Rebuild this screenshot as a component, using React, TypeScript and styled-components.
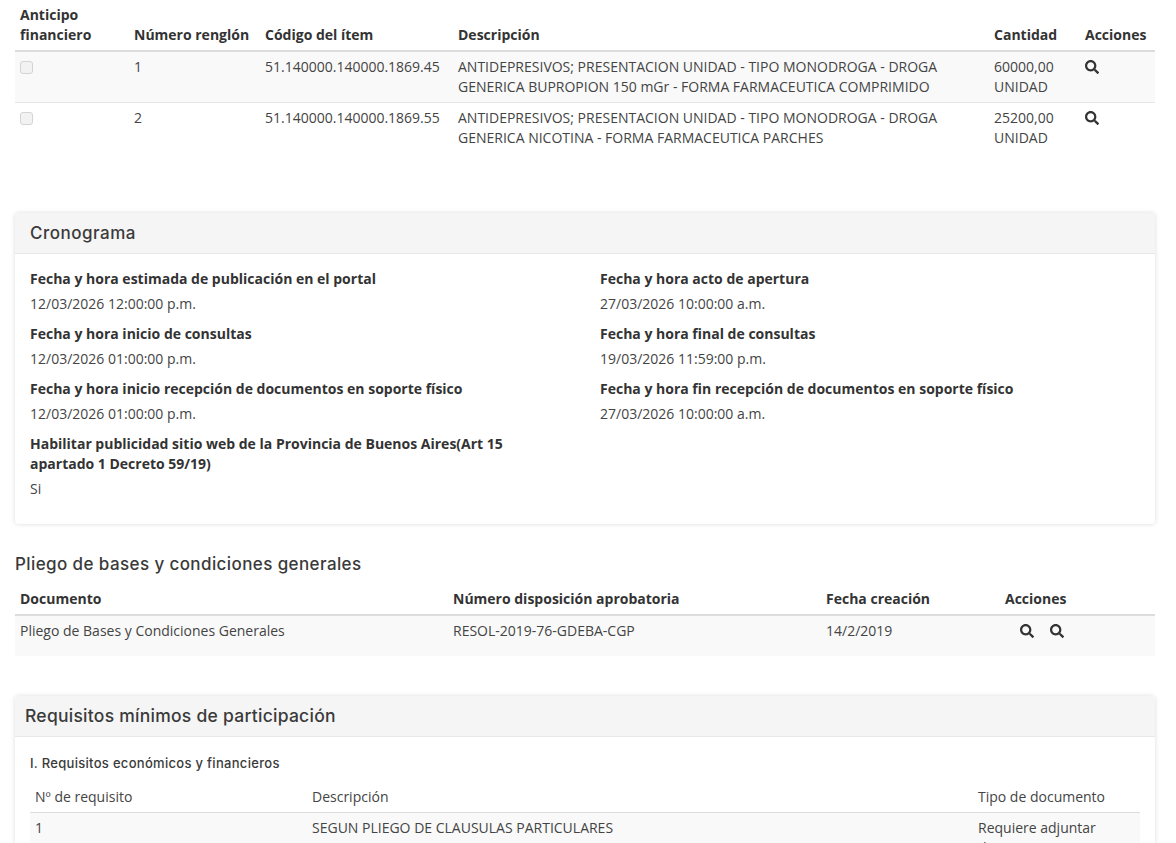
import React from 'react'
import styled, { createGlobalStyle } from 'styled-components'
import { FaSearch } from 'react-icons/fa'

const GlobalStyle = createGlobalStyle`
  html, body {
    margin: 0;
    height: 100%;
    overflow: hidden;
    background: #fff;
  }
  body {
    font-family: 'Open Sans', 'Liberation Sans', sans-serif;
    font-size: 14px;
    line-height: 20px;
    color: #333;
  }
`

const items = [
  {
    id: 1,
    code: '51.140000.140000.1869.45',
    desc: 'ANTIDEPRESIVOS; PRESENTACION UNIDAD - TIPO MONODROGA - DROGA GENERICA BUPROPION 150 mGr - FORMA FARMACEUTICA COMPRIMIDO',
    qty: '60000,00',
  },
  {
    id: 2,
    code: '51.140000.140000.1869.55',
    desc: 'ANTIDEPRESIVOS; PRESENTACION UNIDAD - TIPO MONODROGA - DROGA GENERICA NICOTINA - FORMA FARMACEUTICA PARCHES',
    qty: '25200,00',
  },
]

const schedule = [
  ['Fecha y hora estimada de publicación en el portal', '12/03/2026 12:00:00 p.m.'],
  ['Fecha y hora acto de apertura', '27/03/2026 10:00:00 a.m.'],
  ['Fecha y hora inicio de consultas', '12/03/2026 01:00:00 p.m.'],
  ['Fecha y hora final de consultas', '19/03/2026 11:59:00 p.m.'],
  ['Fecha y hora inicio recepción de documentos en soporte físico', '12/03/2026 01:00:00 p.m.'],
  ['Fecha y hora fin recepción de documentos en soporte físico', '27/03/2026 10:00:00 a.m.'],
  ['Habilitar publicidad sitio web de la Provincia de Buenos Aires(Art 15 apartado 1 Decreto 59/19)', 'Si'],
]

const App = () => (
  <Page>
    <GlobalStyle />
    <Table>
      <colgroup>
        <col width={114} />
        <col width={131} />
        <col width={193} />
        <col width={536} />
        <col width={91} />
        <col width={75} />
      </colgroup>
      <thead>
        <tr>
          <Th>Anticipo financiero</Th>
          <Th>Número renglón</Th>
          <Th>Código del ítem</Th>
          <Th>Descripción</Th>
          <Th>Cantidad</Th>
          <Th>Acciones</Th>
        </tr>
      </thead>
      <tbody>
        {items.map((item) => (
          <Row key={item.id} $striped={item.id === 1} $divider={item.id === 1}>
            <Td>
              <Check type="checkbox" disabled />
            </Td>
            <Td>{item.id}</Td>
            <Td>{item.code}</Td>
            <Td>{item.desc}</Td>
            <Td>
              {item.qty}
              <br />
              UNIDAD
            </Td>
            <Td>
              <IconButton>
                <FaSearch size={14} />
              </IconButton>
            </Td>
          </Row>
        ))}
      </tbody>
    </Table>

    <Card $top={60}>
      <CardHeader $inset={15}>
        <CardTitle $size={17} $spacing={0.5}>Cronograma</CardTitle>
      </CardHeader>
      <ScheduleGrid>
        {schedule.map(([label, value]) => (
          <Field key={label}>
            <FieldLabel>{label}</FieldLabel>
            <div>{value}</div>
          </Field>
        ))}
      </ScheduleGrid>
    </Card>

    <SectionTitle>Pliego de bases y condiciones generales</SectionTitle>
    <Table>
      <colgroup>
        <col width={433} />
        <col width={373} />
        <col width={179} />
        <col width={155} />
      </colgroup>
      <thead>
        <tr>
          <Th>Documento</Th>
          <Th>Número disposición aprobatoria</Th>
          <Th>Fecha creación</Th>
          <Th>Acciones</Th>
        </tr>
      </thead>
      <tbody>
        <Row $striped $tall>
          <Td>Pliego de Bases y Condiciones Generales</Td>
          <Td>RESOL-2019-76-GDEBA-CGP</Td>
          <Td>14/2/2019</Td>
          <Td>
            <ActionIcons>
              <FaSearch size={14} />
              <FaSearch size={14} />
            </ActionIcons>
          </Td>
        </Row>
      </tbody>
    </Table>

    <Card $top={40}>
      <CardHeader $inset={10}>
        <CardTitle $size={17.5} $spacing={0.26}>Requisitos mínimos de participación</CardTitle>
      </CardHeader>
      <RequirementsBody>
        <SubTitle>I. Requisitos económicos y financieros</SubTitle>
        <Table>
          <colgroup>
            <col width={277} />
            <col width={666} />
            <col width={167} />
          </colgroup>
          <thead>
            <tr>
              <LightTh>Nº de requisito</LightTh>
              <LightTh>Descripción</LightTh>
              <LightTh>Tipo de documento</LightTh>
            </tr>
          </thead>
          <tbody>
            <Row $striped>
              <Td>1</Td>
              <Td>SEGUN PLIEGO DE CLAUSULAS PARTICULARES</Td>
              <Td>Requiere adjuntar documento</Td>
            </Row>
          </tbody>
        </Table>
      </RequirementsBody>
    </Card>
  </Page>
)

const Page = styled.div`
  height: 843px;
  overflow: hidden;
  padding: 0 21px 0 15px;
  box-sizing: border-box;
`

const Table = styled.table`
  width: 100%;
  table-layout: fixed;
  border-collapse: separate;
  border-spacing: 0;
`

const Th = styled.th`
  padding: 5px;
  text-align: left;
  vertical-align: bottom;
  font-weight: 700;
  color: #333;
  border-bottom: 2px solid #ddd;
`

const LightTh = styled(Th)`
  font-weight: 400;
  color: #444;
  border-bottom-width: 1px;
`

const Row = styled.tr<{ $striped?: boolean; $tall?: boolean; $divider?: boolean }>`
  background: ${(props) => (props.$striped ? '#f9f9f9' : '#fff')};

  td {
    padding-bottom: ${(props) => (props.$tall ? '15px' : '5px')};
    border-bottom: ${(props) => (props.$divider ? '1px solid #e6e6e6' : 'none')};
  }
`

const Td = styled.td`
  padding: 5px;
  vertical-align: top;
  color: #444;
`

const Check = styled.input`
  appearance: none;
  display: block;
  width: 13px;
  height: 13px;
  margin: 4px 0 0;
  background: #f2f2f2;
  border: 1px solid #d4d4d4;
  border-radius: 3px;
  box-sizing: border-box;
`

const IconButton = styled.span`
  display: inline-flex;
  color: #333;
  margin-top: 3px;
`

const ActionIcons = styled.div`
  display: flex;
  gap: 16px;
  padding: 3px 0 0 15px;
  color: #333;
`

const Card = styled.section<{ $top: number }>`
  margin-top: ${(props) => props.$top}px;
  background: #fff;
  border-radius: 4px;
  box-shadow: 0 0 5px rgba(0, 0, 0, 0.14);
`

const CardHeader = styled.header<{ $inset: number }>`
  display: flex;
  align-items: center;
  height: 40px;
  padding: 0 ${(props) => props.$inset}px;
  background: #f5f5f5;
  border-bottom: 1px solid #e8e8e8;
  border-radius: 4px 4px 0 0;
`

const CardTitle = styled.h3<{ $size: number; $spacing: number }>`
  margin: 0;
  font-family: Inter, 'Liberation Sans', sans-serif;
  font-size: ${(props) => props.$size}px;
  letter-spacing: ${(props) => props.$spacing}px;
  font-weight: 500;
  color: #3a3a3a;
`

const ScheduleGrid = styled.div`
  display: grid;
  grid-template-columns: 570px 540px;
  padding: 15px;
`

const Field = styled.div`
  margin-bottom: 10px;
  max-width: 510px;
  color: #444;
`

const FieldLabel = styled.div`
  margin-bottom: 5px;
  font-weight: 700;
  color: #333;
`

const SectionTitle = styled.h3`
  margin: 29px 0 0;
  height: 31px;
  font-family: Inter, 'Liberation Sans', sans-serif;
  font-size: 17px;
  line-height: 22px;
  letter-spacing: 0.4px;
  font-weight: 500;
  color: #3a3a3a;
`

const RequirementsBody = styled.div`
  padding: 16px 15px 15px;
`

const SubTitle = styled.h4`
  margin: 0 0 9px;
  font-family: Inter, 'Liberation Sans', sans-serif;
  font-size: 13px;
  letter-spacing: 0.3px;
  font-weight: 500;
  color: #3a3a3a;
`

export default App
